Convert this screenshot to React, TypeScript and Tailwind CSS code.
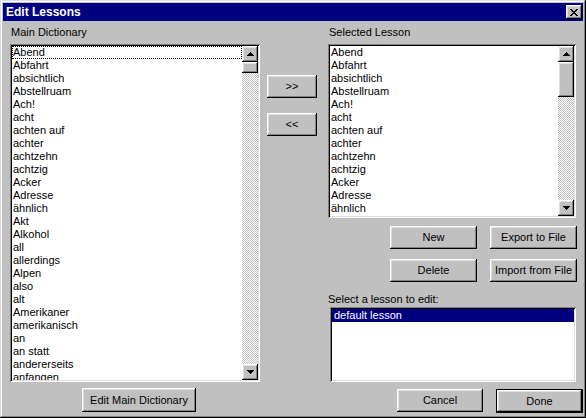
import React from 'react';

const RAISED =
  'shadow-[inset_-1px_-1px_0_#000,inset_1px_1px_0_#fff,inset_-2px_-2px_0_#808080,inset_2px_2px_0_#dfdfdf]';
const SUNKEN =
  'shadow-[inset_1px_1px_0_#808080,inset_-1px_-1px_0_#fff,inset_2px_2px_0_#000,inset_-2px_-2px_0_#dfdfdf]';
const CHECKER =
  'bg-[image:repeating-conic-gradient(#c0c0c0_0%_25%,#ffffff_0%_50%)] bg-[length:2px_2px]';

const MAIN_WORDS = [
  'Abend', 'Abfahrt', 'absichtlich', 'Abstellruam', 'Ach!', 'acht', 'achten auf', 'achter',
  'achtzehn', 'achtzig', 'Acker', 'Adresse', 'ähnlich', 'Akt', 'Alkohol', 'all', 'allerdings',
  'Alpen', 'also', 'alt', 'Amerikaner', 'amerikanisch', 'an', 'an statt', 'andererseits', 'anfangen',
];

const LESSON_WORDS = MAIN_WORDS.slice(0, 14);

function Arrow({ up }: { up: boolean }) {
  return (
    <svg width="7" height="4" viewBox="0 0 7 4" shapeRendering="crispEdges">
      <polygon points={up ? '0,4 7,4 3.5,0' : '0,0 7,0 3.5,4'} fill="#000" />
    </svg>
  );
}

function Button({ label, className = '' }: { label: string; className?: string }) {
  return (
    <button
      className={`bg-[#c0c0c0] ${RAISED} flex items-center justify-center text-black ${className}`}
    >
      {label}
    </button>
  );
}

function ScrollBar({ thumb }: { thumb: number }) {
  return (
    <div className="w-[16px] h-full flex flex-col shrink-0">
      <div className={`h-[16px] bg-[#c0c0c0] ${RAISED} flex items-center justify-center`}>
        <Arrow up />
      </div>
      <div className={`bg-[#c0c0c0] ${RAISED}`} style={{ height: thumb }} />
      <div className={`flex-1 ${CHECKER}`} />
      <div className={`h-[16px] bg-[#c0c0c0] ${RAISED} flex items-center justify-center`}>
        <Arrow up={false} />
      </div>
    </div>
  );
}

function WordList({
  words,
  thumb,
  focusFirst,
  className,
}: {
  words: string[];
  thumb: number;
  focusFirst?: boolean;
  className: string;
}) {
  return (
    <div className={`bg-white ${SUNKEN} p-[2px] flex ${className}`}>
      <div className="flex-1 overflow-hidden">
        {words.map((w, i) => (
          <div
            key={w}
            className={`h-[13px] leading-[13px] pl-[1px] whitespace-nowrap ${
              focusFirst && i === 0 ? 'outline-1 outline-dotted outline-black -outline-offset-1' : ''
            }`}
          >
            {w}
          </div>
        ))}
      </div>
      <ScrollBar thumb={thumb} />
    </div>
  );
}

export default function App() {
  return (
    <div className="w-[586px] h-[418px] overflow-hidden font-['Liberation_Sans',Arial,sans-serif] text-[11px] text-black">
      <div className="w-full h-full bg-[#c0c0c0] p-[3px] flex flex-col shadow-[inset_-1px_-1px_0_#000,inset_1px_1px_0_#dfdfdf,inset_-2px_-2px_0_#808080,inset_2px_2px_0_#fff]">
        {/* Title bar */}
        <div className="h-[18px] bg-[#000080] flex items-center justify-between pl-[3px] pr-[1px]">
          <span className="text-white font-bold text-[12px] leading-[18px]">Edit Lessons</span>
          <div className={`w-[16px] h-[14px] bg-[#c0c0c0] ${RAISED} flex items-center justify-center`}>
            <svg width="8" height="7" viewBox="0 0 8 7" shapeRendering="crispEdges">
              <path d="M0 0h2v1h-2zM6 0h2v1h-2zM1 1h2v1h-2zM5 1h2v1h-2zM2 2h4v1h-4zM3 3h2v1h-2zM2 4h4v1h-4zM1 5h2v1h-2zM5 5h2v1h-2zM0 6h2v1h-2zM6 6h2v1h-2z" fill="#000" />
            </svg>
          </div>
        </div>

        {/* Body */}
        <div className="flex-1 flex pl-[7px] pt-[5px]">
          {/* Left column */}
          <div className="w-[250px] flex flex-col">
            <div className="h-[13px] leading-[13px] pl-[1px]">Main Dictionary</div>
            <WordList words={MAIN_WORDS} thumb={11} focusFirst className="mt-[5px] h-[338px]" />
            <Button label="Edit Main Dictionary" className="mt-[6px] ml-[72px] w-[114px] h-[24px]" />
          </div>

          {/* Middle column */}
          <div className="w-[50px] ml-[7px] flex flex-col pt-[49px]">
            <Button label=">>" className="h-[23px]" />
            <Button label="<<" className="h-[23px] mt-[15px]" />
          </div>

          {/* Right column */}
          <div className="flex-1 ml-[11px] flex flex-col">
            <div className="h-[13px] leading-[13px] pl-[1px]">Selected Lesson</div>
            <WordList words={LESSON_WORDS} thumb={35} className="mt-[5px] h-[174px] w-[248px]" />
            <div className="flex mt-[8px] ml-[62px] gap-[13px]">
              <Button label="New" className="w-[87px] h-[23px]" />
              <Button label="Export to File" className="w-[87px] h-[23px]" />
            </div>
            <div className="flex mt-[10px] ml-[62px] gap-[13px]">
              <Button label="Delete" className="w-[87px] h-[23px]" />
              <Button label="Import from File" className="w-[87px] h-[23px]" />
            </div>
            <div className="h-[13px] leading-[13px] mt-[11px]">Select a lesson to edit:</div>
            <div className={`mt-[1px] ml-[2px] w-[246px] h-[75px] bg-white ${SUNKEN} p-[2px]`}>
              <div className="h-[13px] leading-[13px] bg-[#000080] text-white pl-[2px]">default lesson</div>
            </div>
            <div className="flex mt-[7px] ml-[69px] gap-[13px]">
              <Button label="Cancel" className="w-[86px] h-[23px]" />
              <button
                className={`w-[87px] h-[24px] border border-black bg-[#c0c0c0] ${RAISED} flex items-center justify-center`}
              >
                Done
              </button>
            </div>
          </div>
        </div>
      </div>
    </div>
  );
}
